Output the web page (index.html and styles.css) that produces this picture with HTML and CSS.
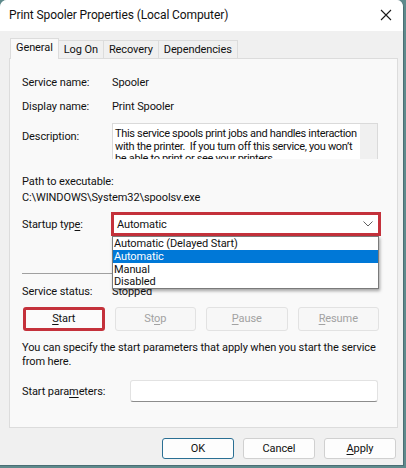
FILE: index.html
```html
<!DOCTYPE html>
<html>
<head>
<meta charset="utf-8">
<link rel="stylesheet" href="styles.css">
</head>
<body>
<div class="window">
  <div class="titlebar">
    <span class="title">Print Spooler Properties (Local Computer)</span>
    <svg class="close" width="12" height="12" viewBox="0 0 12 12"><path d="M1 1 L11 11 M11 1 L1 11" stroke="#1a1a1a" stroke-width="1.1" fill="none"/></svg>
  </div>
  <div class="client">
    <div class="tabs">
      <div class="tab active">General</div>
      <div class="tab">Log On</div>
      <div class="tab">Recovery</div>
      <div class="tab">Dependencies</div>
    </div>
    <div class="panel">
      <div class="row r-name"><span class="label">Service name:</span><span>Spooler</span></div>
      <div class="row r-disp"><span class="label">Display name:</span><span>Print Spooler</span></div>
      <div class="row r-desc"><span class="label">Description:</span>
        <div class="descbox"><div class="desctext">This service spools print jobs and handles interaction<br>with the printer.&nbsp; If you turn off this service, you won’t<br>be able to print or see your printers.</div><div class="scroll"></div></div>
      </div>
      <div class="path-label">Path to executable:</div>
      <div class="path">C:\WINDOWS\System32\spoolsv.exe</div>
      <div class="row r-start"><span class="label">Startup typ<u>e</u>:</span>
        <div class="combo-wrap">
          <div class="combo"><span>Automatic</span>
            <svg class="chev" width="10" height="6" viewBox="0 0 10 6"><path d="M0.5 0.5 L5 5 L9.5 0.5" stroke="#606060" stroke-width="1" fill="none"/></svg>
          </div>
          <div class="list">
            <div class="item">Automatic (Delayed Start)</div>
            <div class="item sel">Automatic</div>
            <div class="item">Manual</div>
            <div class="item">Disabled</div>
          </div>
        </div>
      </div>
      <div class="sep"></div>
      <div class="row r-status"><span class="label">Service status:</span><span>Stopped</span></div>
      <div class="btnrow">
        <div class="btn start"><u>S</u>tart</div>
        <div class="btn dis">St<u>o</u>p</div>
        <div class="btn dis"><u>P</u>ause</div>
        <div class="btn dis"><u>R</u>esume</div>
      </div>
      <p class="note">You can specify the start parameters that apply when you start the service from here.</p>
      <div class="row r-params"><span class="label2">Start para<u>m</u>eters:</span><div class="input"></div></div>
    </div>
    <div class="footer">
      <div class="fbtn ok">OK</div>
      <div class="fbtn">Cancel</div>
      <div class="fbtn"><u>A</u>pply</div>
    </div>
  </div>
</div>
</body>
</html>
```

FILE: styles.css
```css
* { box-sizing: border-box; }
html, body { margin: 0; padding: 0; }
body {
  width: 406px;
  height: 468px;
  background: #5e8a8c;
  font-family: Roboto, "Open Sans", sans-serif;
  font-size: 11px;
  letter-spacing: -0.1px;
  color: #111;
  overflow: hidden;
}
u { text-decoration: underline; text-underline-offset: 1.5px; text-decoration-thickness: 1px; }
.window {
  width: 404px;
  height: 466px;
  background: #f0f0f0;
  border-radius: 7px 7px 0 0;
  overflow: hidden;
  display: flex;
  flex-direction: column;
  border-right: 1px solid #4a6e74;
  border-bottom: 1px solid #4a6e74;
}
.titlebar {
  height: 31px;
  background: #fff;
  display: flex;
  align-items: center;
  justify-content: space-between;
  padding: 0 10px 2px 9px;
}
.title { font-size: 12px; letter-spacing: -0.1px; }
.close { margin-right: 1px; }
.client {
  flex: 1;
  display: flex;
  flex-direction: column;
  padding: 7px 7px 0 9px;
}
.tabs {
  display: flex;
  height: 20px;
  align-items: flex-end;
  padding-left: 1px;
}
.tab {
  height: 18px;
  line-height: 18px;
  padding: 0 5px;
  border: 1px solid #dcdcdc;
  border-bottom: none;
  border-left: none;
  background: #f0f0f0;
}
.tab.active {
  line-height: 17px;
  background: #f9f9f9;
  border-left: 1px solid #dcdcdc;
  padding: 0 5px 2px;
  position: relative;
  z-index: 1;
  margin-bottom: -1px;
  height: 21px;
}
.panel {
  height: 370px;
  width: 389px;
  background: #f9f9f9;
  border: 1px solid #dcdcdc;
  padding: 0 18px 0 12px;
  position: relative;
}
.row { display: flex; align-items: center; }
.label { width: 90px; flex: none; }
.r-name { margin-top: 15px; height: 16px; }
.r-disp { margin-top: 8px; height: 16px; }
.r-desc { margin-top: 9px; align-items: flex-start; }
.r-desc .label { margin-top: 7px; }
.descbox {
  width: 266px;
  height: 36px;
  border: 1px solid #dadada;
  border-bottom: none;
  background: #fff;
  display: flex;
  overflow: hidden;
}
.desctext {
  flex: 1;
  padding: 4px 0 0 2px;
  line-height: 12.5px;
  letter-spacing: -0.33px;
  white-space: nowrap;
  overflow: hidden;
}
.scroll { width: 17px; background: #f0f0f0; flex: none; }
.path-label { margin-top: 15px; height: 16px; line-height: 16px; }
.path { height: 16px; line-height: 16px; }
.r-start { margin-top: 6px; height: 24px; }
.combo-wrap { position: relative; margin-left: -1px; }
.combo {
  width: 270px;
  height: 24px;
  border: 3px solid #c4313b;
  background: #fff;
  display: flex;
  align-items: center;
  justify-content: space-between;
  padding: 0 5px 0 3px;
}
.list {
  position: absolute;
  left: 1px;
  top: 24px;
  width: 267px;
  background: #fff;
  border: 1px solid #7a7a7a;
  box-shadow: 1px 2px 3px rgba(0,0,0,0.35);
  z-index: 5;
}
.item { height: 12.8px; line-height: 13px; padding-left: 1px; }
.item.sel { background: #0078d7; color: #fff; }
.sep { margin-top: 37px; height: 1px; background: #a0a0a0; width: 355px; }
.r-status { margin-top: 9px; height: 16px; }
.btnrow {
  margin-top: 8px;
  display: grid;
  grid-template-columns: repeat(4, 1fr);
  gap: 10px;
  width: 356px;
  margin-left: 1px;
}
.btn {
  height: 24px;
  border: 1px solid #d5d5d5;
  border-radius: 3px;
  background: #fbfbfb;
  text-align: center;
  line-height: 22px;
}
.btn.dis { color: #a2a2a2; border-color: #e2e2e2; background: #f7f7f7; }
.btn.start { border: 3px solid #c4313b; line-height: 18px; border-radius: 3px; }
.note { margin: 10px 0 0 0; line-height: 14px; width: 360px; }
.r-params { margin-top: 11px; height: 22px; }
.label2 { width: 108px; flex: none; }
.input {
  width: 248px;
  height: 22px;
  background: #fff;
  border: 1px solid #e2e2e2;
  border-bottom: 1px solid #8c8c8c;
  border-radius: 3px;
}
.footer {
  display: flex;
  justify-content: flex-end;
  gap: 9px;
  padding-top: 10px;
}
.fbtn {
  width: 72px;
  height: 21px;
  border: 1px solid #d0d0d0;
  border-radius: 3px;
  background: #fdfdfd;
  text-align: center;
  line-height: 19px;
}
.fbtn.ok { border: 1px solid #2a6f93; }
```
